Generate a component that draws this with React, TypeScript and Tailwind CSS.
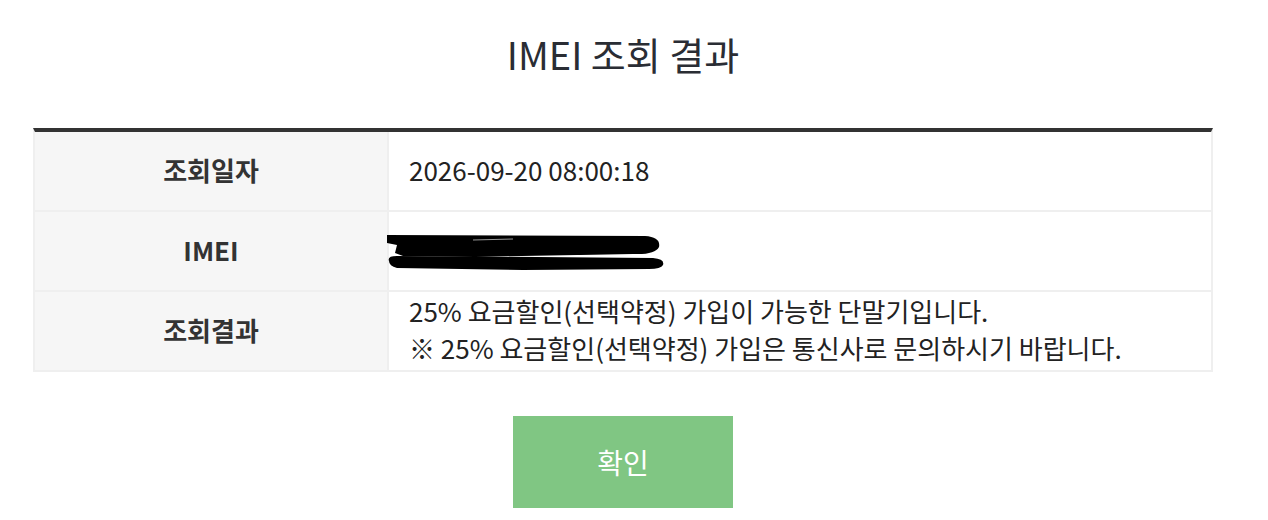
import React from 'react'

const font = { fontFamily: '"Noto Sans CJK KR", "Noto Sans", sans-serif' }

function Redacted() {
  return (
    <svg width="290" height="44" viewBox="0 0 290 44" className="block">
      <path d="M4 6 L262 7 Q278 8 276 18 Q272 26 250 25 L92 28 L20 27 L12 24 L14 16 L4 14 Z" fill="#000" />
      <path d="M6 32 Q4 27 14 27 L270 29 Q282 30 280 36 Q278 40 266 40 L140 41 L14 39 Q6 37 6 32 Z" fill="#000" />
      <path d="M90 11 L130 10" stroke="#fff" strokeWidth="1" opacity="0.6" />
    </svg>
  )
}

function Row({ label, children }: { label: string; children: React.ReactNode }) {
  return (
    <div className="flex h-[80px] border-b-2 border-[#efefef]">
      <div className="w-[354px] shrink-0 bg-[#f6f6f6] border-r-2 border-[#efefef] flex items-center justify-center pb-[4px] text-[26px] font-bold text-[#333]">
        {label}
      </div>
      <div className="flex-1 flex items-center pl-[20px] pb-[4px] text-[26px] text-[#222]">{children}</div>
    </div>
  )
}

export default function App() {
  return (
    <div className="bg-white w-[1268px] h-[520px] overflow-hidden" style={font}>
      <div className="w-[1180px] ml-[33px]">
        <h1 className="text-center text-[38px] leading-[56px] text-[#2a2d34] pt-[26px] font-normal">IMEI 조회 결과</h1>
        <div className="mt-[46px] border-t-[4px] border-[#333] border-x-2 border-x-[#efefef]">
          <Row label="조회일자">2026-09-20 08:00:18</Row>
          <Row label="IMEI">
            <div className="-ml-[26px] mt-[4px]">
              <Redacted />
            </div>
          </Row>
          <Row label="조회결과">
            <div className="leading-[37px]">
              <p>25% 요금할인(선택약정) 가입이 가능한 단말기입니다.</p>
              <p>※ 25% 요금할인(선택약정) 가입은 통신사로 문의하시기 바랍니다.</p>
            </div>
          </Row>
        </div>
        <div className="flex justify-center mt-[44px]">
          <button type="button" className="w-[220px] h-[92px] bg-[#80c683] text-white text-[28px]">
            확인
          </button>
        </div>
      </div>
    </div>
  )
}
